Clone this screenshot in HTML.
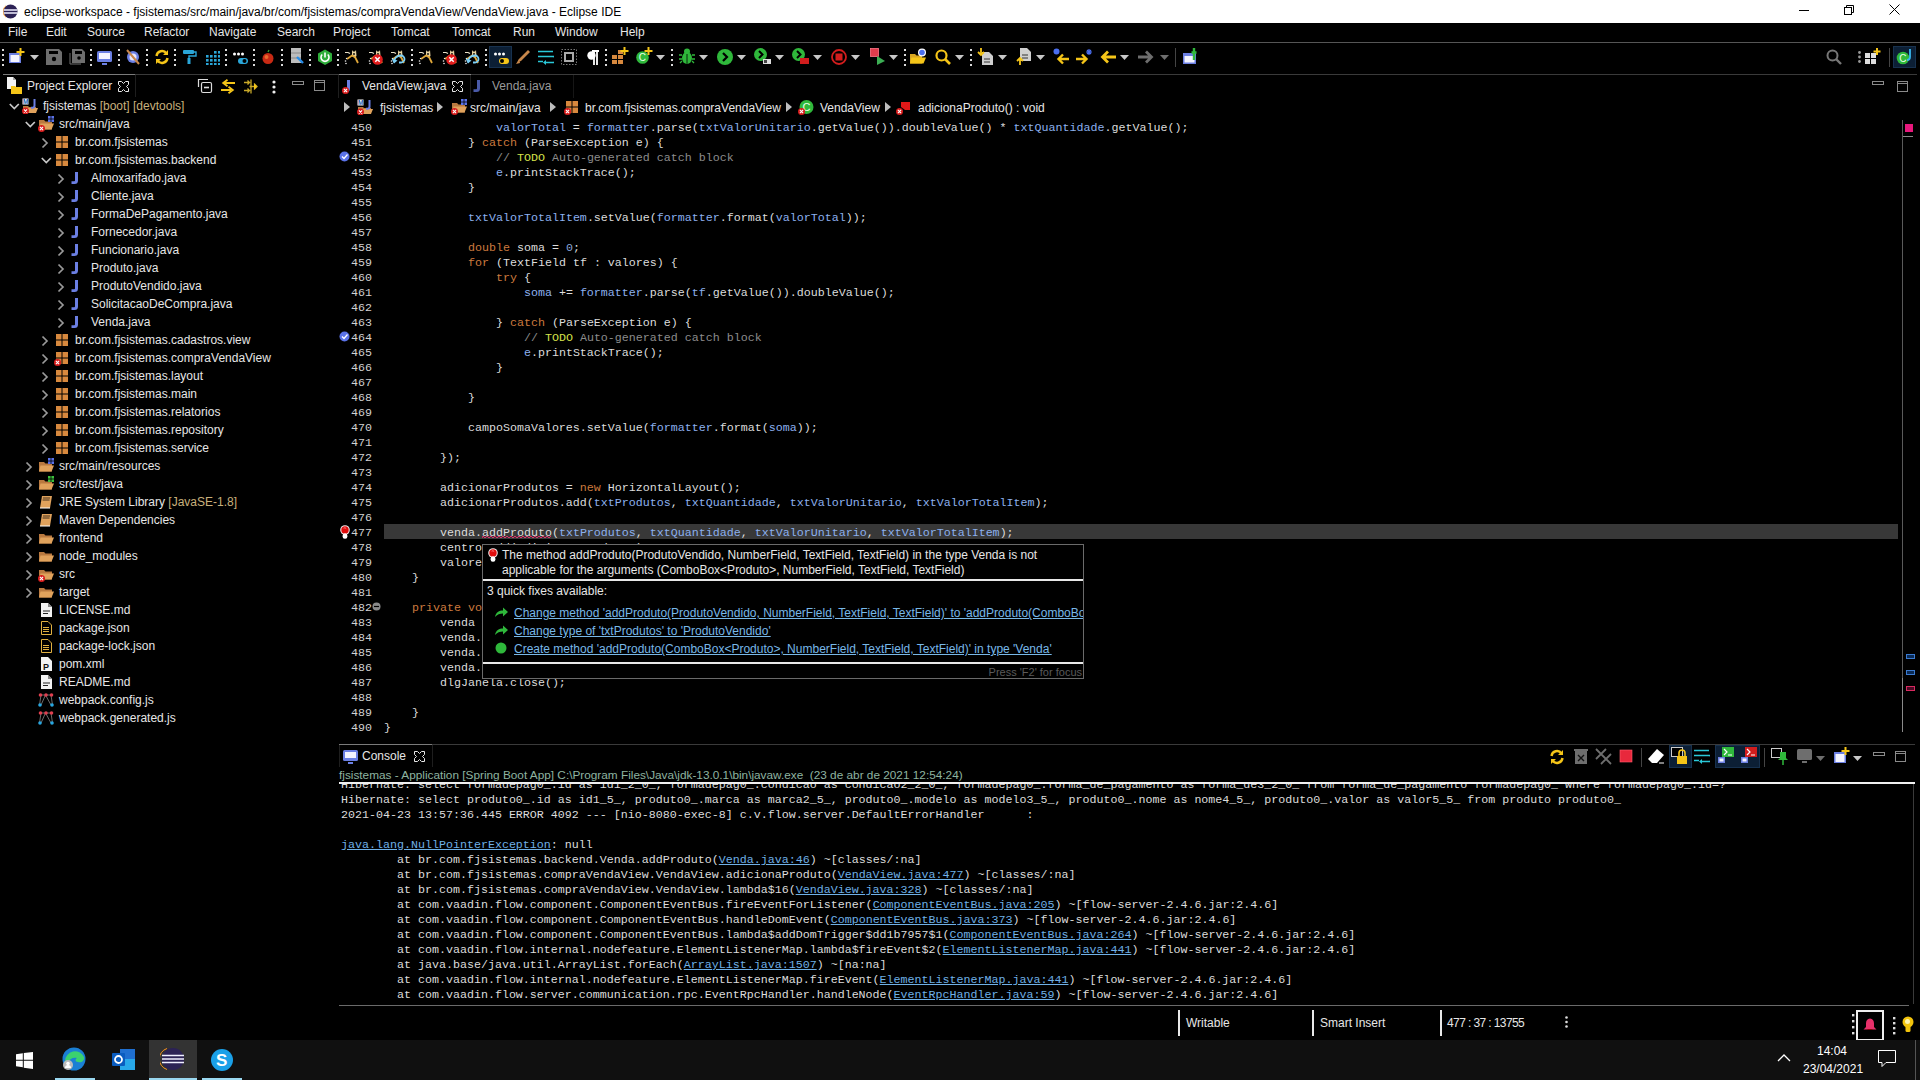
<!DOCTYPE html>
<html><head><meta charset="utf-8"><title>Eclipse IDE</title>
<style>
*{margin:0;padding:0;box-sizing:border-box}
html,body{width:1920px;height:1080px;overflow:hidden;background:#000}
body{position:relative;font-family:"Liberation Sans",sans-serif;font-size:12px;color:#dcdcdc}
.a{position:absolute}
.t{position:absolute;white-space:pre;line-height:15px}
.mono{font-family:"Liberation Mono",monospace;font-size:11.66px}
#title{left:0;top:0;width:1920px;height:23px;background:#fff;color:#000}
#menu{left:0;top:22px;width:1920px;height:20px;background:#000}
.hl{height:1px;background:#4a4a4a}
.vl{width:1px;background:#4a4a4a}
.code .ln{position:absolute;left:340px;width:32px;text-align:right;color:#d2d2d2}
.code .cl{position:absolute;left:384px;white-space:pre}
.k{color:#cc7a3e}.f{color:#8cb0ee}.c{color:#8c8c8c}.td{color:#d6e24a}.w{color:#e6e6e6}.n{color:#8aa6d8}
.tree .r{position:absolute;height:18px;line-height:18px;white-space:pre;color:#dcdcdc}
.dec{color:#c8b07c}
.lnk{color:#7cbde8;text-decoration:underline}
.con .cl{position:absolute;left:341px;white-space:pre;color:#dcdcdc}
.clk{color:#6fb0e6;text-decoration:underline}
</style></head><body>

<div class="a" id="title"></div>
<svg class="a" style="left:3px;top:4px" width="15" height="15" viewBox="0 0 15 15"><circle cx="7.5" cy="7.5" r="7" fill="#2c2255"/><path d="M0.8 6h13.4M0.8 9h13.4" stroke="#f0f0ff" stroke-width="1.3"/><path d="M3 1.8A7 7 0 0 0 3 13.2" stroke="#f7941e" stroke-width="0.8" fill="none"/></svg>
<div class="t" style="left:24px;top:5px;color:#000;font-size:12px">eclipse-workspace - fjsistemas/src/main/java/br/com/fjsistemas/compraVendaView/VendaView.java - Eclipse IDE</div>
<svg class="a" style="left:1799px;top:9px" width="10" height="3" viewBox="0 0 10 3"><path d="M0 1.5h10" stroke="#000" stroke-width="1"/></svg>
<svg class="a" style="left:1843px;top:4px" width="12" height="12" viewBox="0 0 12 12"><rect x="1.5" y="3.5" width="7" height="7" fill="none" stroke="#000"/><path d="M3.5 3.5V1.5h7v7h-2" fill="none" stroke="#000"/></svg>
<svg class="a" style="left:1889px;top:4px" width="11" height="11" viewBox="0 0 11 11"><path d="M0.5 0.5l10 10M10.5 0.5l-10 10" stroke="#000" stroke-width="1"/></svg>
<div class="a" style="left:0;top:23px;width:1920px;height:19px;background:#000"></div>
<div class="t" style="left:8px;top:25px;color:#e6e6e6;font-size:12px">File</div>
<div class="t" style="left:46px;top:25px;color:#e6e6e6;font-size:12px">Edit</div>
<div class="t" style="left:87px;top:25px;color:#e6e6e6;font-size:12px">Source</div>
<div class="t" style="left:144px;top:25px;color:#e6e6e6;font-size:12px">Refactor</div>
<div class="t" style="left:209px;top:25px;color:#e6e6e6;font-size:12px">Navigate</div>
<div class="t" style="left:277px;top:25px;color:#e6e6e6;font-size:12px">Search</div>
<div class="t" style="left:333px;top:25px;color:#e6e6e6;font-size:12px">Project</div>
<div class="t" style="left:391px;top:25px;color:#e6e6e6;font-size:12px">Tomcat</div>
<div class="t" style="left:452px;top:25px;color:#e6e6e6;font-size:12px">Tomcat</div>
<div class="t" style="left:513px;top:25px;color:#e6e6e6;font-size:12px">Run</div>
<div class="t" style="left:555px;top:25px;color:#e6e6e6;font-size:12px">Window</div>
<div class="t" style="left:620px;top:25px;color:#e6e6e6;font-size:12px">Help</div>
<div class="a" style="left:0;top:42px;width:1920px;height:1px;background:#555"></div>
<div class="a" style="left:2px;top:49px;width:2px;height:18px;background:repeating-linear-gradient(to bottom,#d8d8d8 0 2px,transparent 2px 5px)"></div>
<svg class="a" style="left:8px;top:48px" width="17" height="16" viewBox="0 0 17 16"><rect x="1" y="5" width="12" height="10" fill="#6b7fe3"/><rect x="2.5" y="7" width="9" height="7" fill="#f4f4ff"/><path d="M12.5 0v8M8.5 4h8" stroke="#f5c518" stroke-width="2"/></svg>
<svg class="a" style="left:30px;top:55px" width="9" height="5" viewBox="0 0 9 5"><path d="M0 0h9l-4.5 5z" fill="#c8c8c8"/></svg>
<svg class="a" style="left:46px;top:49px" width="16" height="16" viewBox="0 0 16 16"><path d="M0 0h13l3 3v13H0z" fill="#6e6e6e"/><rect x="3" y="2" width="9" height="3" fill="#000"/><circle cx="8" cy="10" r="2.2" fill="#000"/></svg>
<svg class="a" style="left:69px;top:49px" width="16" height="16" viewBox="0 0 16 16"><path d="M3 0h10l3 3v11H3z" fill="#6e6e6e"/><rect x="6" y="2" width="7" height="3" fill="#000"/><circle cx="10" cy="9" r="1.8" fill="#000"/><path d="M1 4v11h11" stroke="#6e6e6e" stroke-width="1" fill="none"/></svg>
<div class="a" style="left:90px;top:49px;width:2px;height:18px;background:repeating-linear-gradient(to bottom,#d8d8d8 0 2px,transparent 2px 5px)"></div>
<svg class="a" style="left:97px;top:51px" width="15" height="14" viewBox="0 0 15 14"><rect x="0" y="0" width="15" height="11" rx="1.5" fill="#6b7fe3"/><rect x="2" y="2" width="11" height="6" fill="#f4f4ff"/><path d="M5 13h5" stroke="#6b7fe3" stroke-width="2"/></svg>
<div class="a" style="left:118px;top:49px;width:2px;height:18px;background:repeating-linear-gradient(to bottom,#d8d8d8 0 2px,transparent 2px 5px)"></div>
<svg class="a" style="left:125px;top:49px" width="16" height="16" viewBox="0 0 16 16"><circle cx="8" cy="8" r="6" fill="#6b7fe3"/><circle cx="8" cy="8" r="3.5" fill="#e8e8ff"/><path d="M2 1l12 14" stroke="#c8874a" stroke-width="2"/></svg>
<div class="a" style="left:146px;top:49px;width:2px;height:18px;background:repeating-linear-gradient(to bottom,#d8d8d8 0 2px,transparent 2px 5px)"></div>
<svg class="a" style="left:154px;top:49px" width="16" height="16" viewBox="0 0 16 16"><path d="M2.5 7a5.5 5.5 0 0 1 10-2.5M13.5 9a5.5 5.5 0 0 1-10 2.5" stroke="#f5c518" stroke-width="2.4" fill="none"/><path d="M14 1v5h-5zM2 15v-5h5z" fill="#f5c518"/></svg>
<div class="a" style="left:174px;top:49px;width:2px;height:18px;background:repeating-linear-gradient(to bottom,#d8d8d8 0 2px,transparent 2px 5px)"></div>
<svg class="a" style="left:182px;top:49px" width="16" height="16" viewBox="0 0 16 16"><rect x="1" y="1" width="11" height="4" rx="1" fill="#2aa6d8"/><path d="M12 3h2v4H7v3" stroke="#2aa6d8" stroke-width="1.4" fill="none"/><rect x="5.5" y="9" width="3" height="6" fill="#2aa6d8"/></svg>
<svg class="a" style="left:204px;top:49px" width="16" height="16" viewBox="0 0 16 16"><rect x="10" y="2" width="2.6" height="2.6" fill="#2aa6d8"/><rect x="14" y="2" width="2.6" height="2.6" fill="#2aa6d8"/><rect x="2" y="6" width="2.6" height="2.6" fill="#2aa6d8"/><rect x="6" y="6" width="2.6" height="2.6" fill="#2aa6d8"/><rect x="10" y="6" width="2.6" height="2.6" fill="#2aa6d8"/><rect x="14" y="6" width="2.6" height="2.6" fill="#2aa6d8"/><rect x="2" y="10" width="2.6" height="2.6" fill="#2aa6d8"/><rect x="6" y="10" width="2.6" height="2.6" fill="#2aa6d8"/><rect x="10" y="10" width="2.6" height="2.6" fill="#2aa6d8"/><rect x="14" y="10" width="2.6" height="2.6" fill="#2aa6d8"/><rect x="2" y="14" width="2.6" height="2.6" fill="#2aa6d8"/><rect x="6" y="14" width="2.6" height="2.6" fill="#2aa6d8"/><rect x="10" y="14" width="2.6" height="2.6" fill="#2aa6d8"/><rect x="14" y="14" width="2.6" height="2.6" fill="#2aa6d8"/></svg>
<div class="a" style="left:225px;top:49px;width:2px;height:18px;background:repeating-linear-gradient(to bottom,#d8d8d8 0 2px,transparent 2px 5px)"></div>
<svg class="a" style="left:232px;top:49px" width="16" height="16" viewBox="0 0 16 16"><circle cx="2.5" cy="5" r="1.5" fill="#fff"/><circle cx="6.5" cy="5" r="1.5" fill="#fff"/><circle cx="10.5" cy="5" r="1.5" fill="#fff"/><rect x="6" y="9" width="10" height="6" rx="3" fill="#2aa6d8"/><circle cx="12.5" cy="12" r="2" fill="#000"/></svg>
<div class="a" style="left:253px;top:49px;width:2px;height:18px;background:repeating-linear-gradient(to bottom,#d8d8d8 0 2px,transparent 2px 5px)"></div>
<svg class="a" style="left:262px;top:49px" width="12" height="16" viewBox="0 0 12 16"><circle cx="6" cy="9.5" r="5.5" fill="#c82a14"/><circle cx="4.5" cy="8" r="2" fill="#e86a30"/><path d="M6 3l1-2" stroke="#3a3" stroke-width="1.2"/></svg>
<div class="a" style="left:281px;top:49px;width:2px;height:18px;background:repeating-linear-gradient(to bottom,#d8d8d8 0 2px,transparent 2px 5px)"></div>
<svg class="a" style="left:290px;top:48px" width="16" height="16" viewBox="0 0 16 16"><rect x="1" y="0" width="10" height="15" fill="#bdbdbd"/><path d="M1 5h10M1 10h10" stroke="#888"/><path d="M7 9l6 6" stroke="#2a8ee8" stroke-width="2.4"/></svg>
<div class="a" style="left:309px;top:49px;width:2px;height:18px;background:repeating-linear-gradient(to bottom,#d8d8d8 0 2px,transparent 2px 5px)"></div>
<svg class="a" style="left:317px;top:49px" width="16" height="16" viewBox="0 0 16 16"><path d="M8 0.5l7 4v7.5l-7 4-7-4V4.5z" fill="#2fae3b"/><path d="M5.2 5.5a4 4 0 1 0 5.6 0M8 3.5v5" stroke="#fff" stroke-width="1.6" fill="none"/></svg>
<div class="a" style="left:337px;top:49px;width:2px;height:18px;background:repeating-linear-gradient(to bottom,#d8d8d8 0 2px,transparent 2px 5px)"></div>
<svg class="a" style="left:344px;top:49px" width="16" height="16" viewBox="0 0 16 16"><path d="M1 3.5h3l2 1" stroke="#e8e0c8" stroke-width="1.2" fill="none"/><path d="M8 1l1 1.5h2l1-1.5 0.5 6-2 2-2.5-2z" fill="#e6d2a0"/><circle cx="10" cy="5" r="0.9" fill="#000"/><path d="M3 10l5-3.5 3 1.5 3 6" stroke="#e0a83a" stroke-width="1.8" fill="none"/><circle cx="1.5" cy="12" r="0.8" fill="#eee"/><circle cx="2" cy="14.5" r="0.8" fill="#eee"/><circle cx="2.5" cy="9.5" r="0.7" fill="#eee"/></svg>
<svg class="a" style="left:368px;top:49px" width="16" height="16" viewBox="0 0 16 16"><path d="M1 3.5h3l2 1" stroke="#e8e0c8" stroke-width="1.2" fill="none"/><path d="M8 1l1 1.5h2l1-1.5 0.5 6-2 2-2.5-2z" fill="#e6d2a0"/><circle cx="10" cy="5" r="0.9" fill="#000"/><path d="M3 10l5-3.5 3 1.5 3 6" stroke="#e0a83a" stroke-width="1.8" fill="none"/><circle cx="1.5" cy="12" r="0.8" fill="#eee"/><circle cx="2" cy="14.5" r="0.8" fill="#eee"/><circle cx="2.5" cy="9.5" r="0.7" fill="#eee"/><circle cx="9.5" cy="10.5" r="5.3" fill="#e21d1d"/><path d="M7.3 8.3l4.4 4.4M11.7 8.3l-4.4 4.4" stroke="#fff" stroke-width="1.5"/></svg>
<svg class="a" style="left:390px;top:49px" width="16" height="16" viewBox="0 0 16 16"><path d="M1 3.5h3l2 1" stroke="#e8e0c8" stroke-width="1.2" fill="none"/><path d="M8 1l1 1.5h2l1-1.5 0.5 6-2 2-2.5-2z" fill="#e6d2a0"/><circle cx="10" cy="5" r="0.9" fill="#000"/><path d="M3 10l5-3.5 3 1.5 3 6" stroke="#e0a83a" stroke-width="1.8" fill="none"/><circle cx="1.5" cy="12" r="0.8" fill="#eee"/><circle cx="2" cy="14.5" r="0.8" fill="#eee"/><circle cx="2.5" cy="9.5" r="0.7" fill="#eee"/><path d="M4 13.5C4 9 7 6.5 11 6.5a3.5 3.5 0 0 1 0 7H9" stroke="#7cd0f8" stroke-width="1.8" fill="none"/><path d="M1.5 9.5l2.5 5 3.5-3z" fill="#7cd0f8"/></svg>
<div class="a" style="left:411px;top:49px;width:2px;height:18px;background:repeating-linear-gradient(to bottom,#d8d8d8 0 2px,transparent 2px 5px)"></div>
<svg class="a" style="left:418px;top:49px" width="16" height="16" viewBox="0 0 16 16"><path d="M1 3.5h3l2 1" stroke="#e8e0c8" stroke-width="1.2" fill="none"/><path d="M8 1l1 1.5h2l1-1.5 0.5 6-2 2-2.5-2z" fill="#e6d2a0"/><circle cx="10" cy="5" r="0.9" fill="#000"/><path d="M3 10l5-3.5 3 1.5 3 6" stroke="#e0a83a" stroke-width="1.8" fill="none"/><circle cx="1.5" cy="12" r="0.8" fill="#eee"/><circle cx="2" cy="14.5" r="0.8" fill="#eee"/><circle cx="2.5" cy="9.5" r="0.7" fill="#eee"/></svg>
<svg class="a" style="left:442px;top:49px" width="16" height="16" viewBox="0 0 16 16"><path d="M1 3.5h3l2 1" stroke="#e8e0c8" stroke-width="1.2" fill="none"/><path d="M8 1l1 1.5h2l1-1.5 0.5 6-2 2-2.5-2z" fill="#e6d2a0"/><circle cx="10" cy="5" r="0.9" fill="#000"/><path d="M3 10l5-3.5 3 1.5 3 6" stroke="#e0a83a" stroke-width="1.8" fill="none"/><circle cx="1.5" cy="12" r="0.8" fill="#eee"/><circle cx="2" cy="14.5" r="0.8" fill="#eee"/><circle cx="2.5" cy="9.5" r="0.7" fill="#eee"/><circle cx="9.5" cy="10.5" r="5.3" fill="#e21d1d"/><path d="M7.3 8.3l4.4 4.4M11.7 8.3l-4.4 4.4" stroke="#fff" stroke-width="1.5"/></svg>
<svg class="a" style="left:464px;top:49px" width="16" height="16" viewBox="0 0 16 16"><path d="M1 3.5h3l2 1" stroke="#e8e0c8" stroke-width="1.2" fill="none"/><path d="M8 1l1 1.5h2l1-1.5 0.5 6-2 2-2.5-2z" fill="#e6d2a0"/><circle cx="10" cy="5" r="0.9" fill="#000"/><path d="M3 10l5-3.5 3 1.5 3 6" stroke="#e0a83a" stroke-width="1.8" fill="none"/><circle cx="1.5" cy="12" r="0.8" fill="#eee"/><circle cx="2" cy="14.5" r="0.8" fill="#eee"/><circle cx="2.5" cy="9.5" r="0.7" fill="#eee"/><path d="M4 13.5C4 9 7 6.5 11 6.5a3.5 3.5 0 0 1 0 7H9" stroke="#7cd0f8" stroke-width="1.8" fill="none"/><path d="M1.5 9.5l2.5 5 3.5-3z" fill="#7cd0f8"/></svg>
<div class="a" style="left:485px;top:49px;width:2px;height:18px;background:repeating-linear-gradient(to bottom,#d8d8d8 0 2px,transparent 2px 5px)"></div>
<div class="a" style="left:489px;top:46px;width:23px;height:22px;background:#0c1f35;border:1px solid #17314e"></div>
<svg class="a" style="left:493px;top:49px" width="16" height="16" viewBox="0 0 16 16"><circle cx="2.5" cy="5" r="1.5" fill="#fff"/><circle cx="6.5" cy="5" r="1.5" fill="#fff"/><circle cx="10.5" cy="5" r="1.5" fill="#fff"/><rect x="6" y="9" width="10" height="6" rx="3" fill="#f5c518"/><circle cx="9" cy="12" r="2" fill="#000"/></svg>
<svg class="a" style="left:515px;top:49px" width="16" height="16" viewBox="0 0 16 16"><path d="M13 1l2 2-9 9-3 1 1-3z" fill="#c8874a"/><path d="M4 10l-3 5 4-1" fill="#c8874a"/></svg>
<svg class="a" style="left:538px;top:50px" width="16" height="15" viewBox="0 0 16 15"><path d="M0 1.5h15M0 6.5h15a3 3 0 0 1 0 6H8M0 11.5h5" stroke="#2ac8d8" stroke-width="1.6" fill="none"/><path d="M8 10l-3 2.5 3 2.5z" fill="#2ac8d8"/></svg>
<svg class="a" style="left:561px;top:49px" width="16" height="16" viewBox="0 0 16 16"><rect x="0.5" y="0.5" width="15" height="15" fill="none" stroke="#777" stroke-dasharray="1.5 1.5"/><rect x="4" y="4" width="8" height="8" fill="none" stroke="#aaa" stroke-width="2"/></svg>
<svg class="a" style="left:586px;top:50px" width="14" height="15" viewBox="0 0 14 15"><path d="M6 1h7M8 1v14M11 1v14" stroke="#fff" stroke-width="1.8"/><circle cx="5.5" cy="5.5" r="4.2" fill="#fff"/></svg>
<div class="a" style="left:605px;top:49px;width:2px;height:18px;background:repeating-linear-gradient(to bottom,#d8d8d8 0 2px,transparent 2px 5px)"></div>
<svg class="a" style="left:612px;top:47px" width="17" height="17" viewBox="0 0 17 17"><rect x="0" y="8" width="5" height="4" fill="#d8893e"/><rect x="6" y="8" width="5" height="4" fill="#d8893e"/><rect x="0" y="13" width="5" height="4" fill="#d8893e"/><rect x="6" y="13" width="5" height="4" fill="#d8893e"/><rect x="6" y="3" width="5" height="4" fill="#d8893e"/><path d="M12.5 0v8M8.5 4h8" stroke="#f5c518" stroke-width="2"/></svg>
<svg class="a" style="left:636px;top:47px" width="17" height="17" viewBox="0 0 17 17"><circle cx="6.5" cy="10.5" r="6.3" fill="#2fb83b"/><text x="2.8" y="14.3" font-family="Liberation Sans" font-size="10" fill="#e8ffe8">C</text><path d="M12.5 0v8M8.5 4h8" stroke="#f5c518" stroke-width="2"/></svg>
<svg class="a" style="left:656px;top:55px" width="9" height="5" viewBox="0 0 9 5"><path d="M0 0h9l-4.5 5z" fill="#c8c8c8"/></svg>
<div class="a" style="left:671px;top:49px;width:2px;height:18px;background:repeating-linear-gradient(to bottom,#d8d8d8 0 2px,transparent 2px 5px)"></div>
<svg class="a" style="left:679px;top:48px" width="16" height="16" viewBox="0 0 16 16"><ellipse cx="8" cy="10" rx="5" ry="6" fill="#2fb83b"/><circle cx="8" cy="3.5" r="3" fill="#2fb83b"/><path d="M0 7h3M13 7h3M0 11h3M13 11h3M1 15l2-2M15 15l-2-2M8 5v11" stroke="#2fb83b" stroke-width="1.3"/><path d="M8 6v10" stroke="#000" stroke-width="0.8"/></svg>
<svg class="a" style="left:699px;top:55px" width="9" height="5" viewBox="0 0 9 5"><path d="M0 0h9l-4.5 5z" fill="#c8c8c8"/></svg>
<svg class="a" style="left:717px;top:49px" width="16" height="16" viewBox="0 0 16 16"><circle cx="8" cy="8" r="8" fill="#2fb83b"/><path d="M6 4l4 4-4 4" stroke="#000" stroke-width="2.2" fill="none"/></svg>
<svg class="a" style="left:737px;top:55px" width="9" height="5" viewBox="0 0 9 5"><path d="M0 0h9l-4.5 5z" fill="#c8c8c8"/></svg>
<svg class="a" style="left:754px;top:48px" width="17" height="17" viewBox="0 0 17 17"><circle cx="6.5" cy="6.5" r="6.5" fill="#2fb83b"/><path d="M5 3l3.5 3.5L5 10" stroke="#000" stroke-width="2" fill="none"/><rect x="9" y="11" width="8" height="5" fill="#ddd"/><rect x="10" y="12" width="3" height="3" fill="#444"/></svg>
<svg class="a" style="left:775px;top:55px" width="9" height="5" viewBox="0 0 9 5"><path d="M0 0h9l-4.5 5z" fill="#c8c8c8"/></svg>
<svg class="a" style="left:792px;top:48px" width="17" height="17" viewBox="0 0 17 17"><circle cx="6.5" cy="6.5" r="6.5" fill="#2fb83b"/><path d="M5 3l3.5 3.5L5 10" stroke="#000" stroke-width="2" fill="none"/><rect x="8" y="10" width="9" height="6" fill="#d21d1d"/></svg>
<svg class="a" style="left:813px;top:55px" width="9" height="5" viewBox="0 0 9 5"><path d="M0 0h9l-4.5 5z" fill="#c8c8c8"/></svg>
<svg class="a" style="left:831px;top:49px" width="16" height="16" viewBox="0 0 16 16"><circle cx="8" cy="8" r="7" fill="none" stroke="#d21d1d" stroke-width="1.8"/><rect x="4.5" y="4.5" width="7" height="7" fill="#d21d1d"/></svg>
<svg class="a" style="left:851px;top:55px" width="9" height="5" viewBox="0 0 9 5"><path d="M0 0h9l-4.5 5z" fill="#c8c8c8"/></svg>
<svg class="a" style="left:870px;top:48px" width="16" height="17" viewBox="0 0 16 17"><rect x="0.5" y="0.5" width="8" height="8" fill="#e03c4c" stroke="#ff7788" stroke-width="0.8"/><path d="M7 8l8 5-8 4z" fill="#3cae54"/></svg>
<svg class="a" style="left:889px;top:55px" width="9" height="5" viewBox="0 0 9 5"><path d="M0 0h9l-4.5 5z" fill="#c8c8c8"/></svg>
<div class="a" style="left:904px;top:49px;width:2px;height:18px;background:repeating-linear-gradient(to bottom,#d8d8d8 0 2px,transparent 2px 5px)"></div>
<svg class="a" style="left:910px;top:48px" width="17" height="17" viewBox="0 0 17 17"><path d="M0 6h5l1.5 1.5H12v8H0z" fill="#d8a520"/><path d="M1.5 9.5H16l-2.5 6H0z" fill="#f5c518"/><circle cx="12" cy="4.5" r="4" fill="#fff"/><circle cx="12" cy="4.5" r="2.8" fill="#4a6ef0"/></svg>
<svg class="a" style="left:935px;top:49px" width="16" height="16" viewBox="0 0 16 16"><circle cx="6.5" cy="6.5" r="5" fill="none" stroke="#f5c518" stroke-width="2.2"/><path d="M10 10l5 5" stroke="#f5c518" stroke-width="2.6"/></svg>
<svg class="a" style="left:955px;top:55px" width="9" height="5" viewBox="0 0 9 5"><path d="M0 0h9l-4.5 5z" fill="#c8c8c8"/></svg>
<div class="a" style="left:970px;top:49px;width:2px;height:18px;background:repeating-linear-gradient(to bottom,#d8d8d8 0 2px,transparent 2px 5px)"></div>
<svg class="a" style="left:977px;top:48px" width="17" height="17" viewBox="0 0 17 17"><path d="M5 4h7l4 4v9H5z" fill="#cfcfcf"/><path d="M7 11h6M7 14h6" stroke="#333"/><path d="M4 0v7M1 4l3 3 3-3" stroke="#f5c518" stroke-width="1.8" fill="none"/></svg>
<svg class="a" style="left:998px;top:55px" width="9" height="5" viewBox="0 0 9 5"><path d="M0 0h9l-4.5 5z" fill="#c8c8c8"/></svg>
<svg class="a" style="left:1016px;top:48px" width="17" height="17" viewBox="0 0 17 17"><path d="M4 0h7l4 4v9H4z" fill="#cfcfcf"/><path d="M6 7h6M6 10h6" stroke="#333"/><path d="M4 17v-7M1 13l3-3 3 3" stroke="#f5c518" stroke-width="1.8" fill="none"/></svg>
<svg class="a" style="left:1036px;top:55px" width="9" height="5" viewBox="0 0 9 5"><path d="M0 0h9l-4.5 5z" fill="#c8c8c8"/></svg>
<svg class="a" style="left:1053px;top:48px" width="17" height="17" viewBox="0 0 17 17"><circle cx="3.5" cy="3.5" r="3" fill="#4a6ef0"/><path d="M16 11H6M10 6.5l-4.5 4.5 4.5 4.5" stroke="#f5c518" stroke-width="2.4" fill="none"/></svg>
<svg class="a" style="left:1076px;top:48px" width="17" height="17" viewBox="0 0 17 17"><path d="M0 11h10M6 6.5l4.5 4.5L6 15.5" stroke="#f5c518" stroke-width="2.4" fill="none"/><path d="M13 1v6M10 4h6M11 2l4 4M15 2l-4 4" stroke="#4a6ef0" stroke-width="1.2"/></svg>
<svg class="a" style="left:1100px;top:49px" width="16" height="16" viewBox="0 0 16 16"><path d="M16 8H3M8 2.5L2.5 8 8 13.5" stroke="#f5c518" stroke-width="2.8" fill="none"/></svg>
<svg class="a" style="left:1120px;top:55px" width="9" height="5" viewBox="0 0 9 5"><path d="M0 0h9l-4.5 5z" fill="#c8c8c8"/></svg>
<svg class="a" style="left:1138px;top:49px" width="16" height="16" viewBox="0 0 16 16"><path d="M0 8h13M8 2.5L13.5 8 8 13.5" stroke="#6e6e6e" stroke-width="2.8" fill="none"/></svg>
<svg class="a" style="left:1160px;top:55px" width="9" height="5" viewBox="0 0 9 5"><path d="M0 0h9l-4.5 5z" fill="#6e6e6e"/></svg>
<div class="a" style="left:1175px;top:48px;width:1px;height:19px;background:#444"></div>
<svg class="a" style="left:1183px;top:48px" width="16" height="17" viewBox="0 0 16 17"><rect x="0" y="5" width="13" height="11" fill="#6b7fe3"/><rect x="1.5" y="8" width="10" height="6.5" fill="#f4f4ff"/><path d="M11 0v7M8.5 4.5h5M11 7v5" stroke="#2fb83b" stroke-width="2.4"/></svg>
<svg class="a" style="left:1826px;top:49px" width="16" height="16" viewBox="0 0 16 16"><circle cx="6.5" cy="6.5" r="5" fill="none" stroke="#777" stroke-width="2"/><path d="M10 10l5 5" stroke="#777" stroke-width="2.4"/></svg>
<svg class="a" style="left:1858px;top:50px" width="3" height="14" viewBox="0 0 3 14"><circle cx="1.5" cy="2.5" r="1.4" fill="#999"/><circle cx="1.5" cy="7" r="1.4" fill="#999"/><circle cx="1.5" cy="11.5" r="1.4" fill="#999"/></svg>
<svg class="a" style="left:1864px;top:48px" width="17" height="17" viewBox="0 0 17 17"><rect x="1" y="5" width="5" height="5" fill="#ddd"/><rect x="7" y="5" width="5" height="5" fill="#ddd"/><rect x="1" y="11" width="5" height="5" fill="#ddd"/><rect x="7" y="11" width="5" height="5" fill="#ddd"/><path d="M13 0v7M9.5 3.5h7" stroke="#f5c518" stroke-width="2"/></svg>
<div class="a" style="left:1889px;top:48px;width:1px;height:19px;background:#444"></div>
<div class="a" style="left:1893px;top:46px;width:23px;height:22px;background:#0c1f35;border:1px solid #17314e"></div>
<svg class="a" style="left:1896px;top:48px" width="17" height="17" viewBox="0 0 17 17"><circle cx="7" cy="10" r="6.3" fill="#2fb83b"/><text x="3.3" y="13.8" font-family="Liberation Sans" font-size="10" fill="#e8ffe8">C</text><path d="M14 1v8a3 3 0 0 1-3 3" stroke="#38b8f0" stroke-width="1.8" fill="none"/></svg>
<div class="a" style="left:3px;top:74px;width:1914px;height:1px;background:#3a3a3a"></div>
<div class="a" style="left:3px;top:74px;width:132px;height:1px;background:#7a7a7a"></div>
<div class="a" style="left:135px;top:75px;width:1px;height:22px;background:#1e1e1e"></div>
<svg class="a" style="left:6px;top:77px" width="17" height="17" viewBox="0 0 17 17"><path d="M1 0h6l3 3v9H1z" fill="#f2f2f2"/><path d="M7 0v3h3" fill="#aaa"/><path d="M5 9h4l1 1h6v7H5z" fill="#f5c518"/></svg>
<div class="t" style="left:27px;top:79px;color:#e6e6e6">Project Explorer</div>
<svg class="a" style="left:118px;top:81px" width="11" height="11" viewBox="0 0 11 11"><path d="M0.5 0.5h3l2 2 2-2h3v3l-2 2 2 2v3h-3l-2-2-2 2h-3v-3l2-2-2-2z" fill="none" stroke="#e8e8e8" stroke-width="1"/></svg>
<svg class="a" style="left:197px;top:78px" width="16" height="16" viewBox="0 0 16 16"><path d="M1.5 9V1.5H11" stroke="#ddd" stroke-width="1.2" fill="none"/><rect x="4.5" y="4.5" width="10" height="10" rx="1.5" fill="none" stroke="#ddd" stroke-width="1.2"/><path d="M7 9.5h5" stroke="#ddd" stroke-width="1.6"/></svg>
<svg class="a" style="left:221px;top:79px" width="16" height="15" viewBox="0 0 16 15"><path d="M14 4H4M6.5 0.8L2.2 4l4.3 3.2M0 11h10M7.5 7.8L11.8 11l-4.3 3.2" stroke="#f5c518" stroke-width="1.8" fill="none"/></svg>
<svg class="a" style="left:244px;top:79px" width="14" height="15" viewBox="0 0 14 15"><path d="M0 3.5h5M3.5 1.5l2 2-2 2M0 11.5h5M3.5 9.5l2 2-2 2M7 0.5v14M5.5 7.5h6M10 4.5l3 3-3 3" stroke="#c8a828" stroke-width="1.3" fill="none"/><path d="M10 4.5l3 3-3 3z" fill="#f5c518"/></svg>
<svg class="a" style="left:272px;top:80px" width="4" height="14" viewBox="0 0 4 14"><circle cx="2" cy="2" r="1.6" fill="#eee"/><circle cx="2" cy="7" r="1.6" fill="#eee"/><circle cx="2" cy="12" r="1.6" fill="#eee"/></svg>
<svg class="a" style="left:292px;top:81px" width="12" height="5" viewBox="0 0 12 5"><rect x="0.5" y="0.5" width="11" height="3" fill="none" stroke="#8a8a8a"/></svg>
<svg class="a" style="left:314px;top:80px" width="11" height="11" viewBox="0 0 11 11"><rect x="0.5" y="0.5" width="10" height="10" fill="none" stroke="#8a8a8a"/><path d="M0.5 2.5h10" stroke="#8a8a8a"/></svg>
<div class="a" style="left:339px;top:74px;width:132px;height:1px;background:#8a8a8a"></div>
<div class="a" style="left:338px;top:75px;width:1px;height:23px;background:#1e1e1e"></div>
<div class="a" style="left:470px;top:75px;width:1px;height:23px;background:#1e1e1e"></div>
<div class="a" style="left:573px;top:75px;width:1px;height:23px;background:#161616"></div>
<svg class="a" style="left:342px;top:78px" width="16" height="16" viewBox="0 0 16 16"><path d="M5 2h3v8.5a3.5 3.5 0 0 1-3.5 3.5H1.5v-2.8h2.7a0.8 0.8 0 0 0 0.8-0.8z" fill="#6b7fe3"/><circle cx="3.5" cy="12.5" r="3.5" fill="#d81b1b"/><path d="M1.9 10.9l3.2 3.2M5.1 10.9l-3.2 3.2" stroke="#fff" stroke-width="1.1"/></svg>
<div class="t" style="left:362px;top:79px;color:#e6e6e6">VendaView.java</div>
<svg class="a" style="left:452px;top:81px" width="11" height="11" viewBox="0 0 11 11"><path d="M0.5 0.5h3l2 2 2-2h3v3l-2 2 2 2v3h-3l-2-2-2 2h-3v-3l2-2-2-2z" fill="none" stroke="#e8e8e8" stroke-width="1"/></svg>
<svg class="a" style="left:472px;top:78px" width="16" height="16" viewBox="0 0 16 16"><path d="M5 2h3v8.5a3.5 3.5 0 0 1-3.5 3.5H1.5v-2.8h2.7a0.8 0.8 0 0 0 0.8-0.8z" fill="#4a5aa8"/></svg>
<div class="t" style="left:492px;top:79px;color:#9a9a9a">Venda.java</div>
<svg class="a" style="left:1872px;top:81px" width="12" height="5" viewBox="0 0 12 5"><rect x="0.5" y="0.5" width="11" height="3" fill="none" stroke="#8a8a8a"/></svg>
<svg class="a" style="left:1897px;top:81px" width="11" height="11" viewBox="0 0 11 11"><rect x="0.5" y="0.5" width="10" height="10" fill="none" stroke="#8a8a8a"/><path d="M0.5 2.5h10" stroke="#8a8a8a"/></svg>
<svg class="a" style="left:344px;top:102px" width="6" height="10" viewBox="0 0 6 10"><path d="M0 0l6 5-6 5z" fill="#bdbdbd"/></svg>
<svg class="a" style="left:357px;top:99px" width="16" height="16" viewBox="0 0 16 16"><path d="M1 8h5l1 1H14v6H1z" fill="#b9793f"/><path d="M2.5 10H16l-2 5H1z" fill="#e0a25c"/><rect x="0.5" y="0.5" width="6" height="6" fill="#fff"/><text x="1" y="6" font-family="Liberation Sans" font-weight="bold" font-size="6.5" fill="#2060b0">M</text><path d="M12.5 1v6.5a2.2 2.2 0 0 1-2.2 2.2H9" stroke="#6b7fe3" stroke-width="2" fill="none"/><circle cx="3.5" cy="13" r="3.5" fill="#d81b1b"/><path d="M1.9 11.4l3.2 3.2M5.1 11.4l-3.2 3.2" stroke="#fff" stroke-width="1.1"/></svg>
<div class="t" style="left:380px;top:101px;color:#e6e6e6">fjsistemas</div>
<svg class="a" style="left:437px;top:102px" width="6" height="10" viewBox="0 0 6 10"><path d="M0 0l6 5-6 5z" fill="#bdbdbd"/></svg>
<svg class="a" style="left:451px;top:99px" width="16" height="16" viewBox="0 0 16 16"><path d="M1 4h5l1.5 1.5H14v8H1z" fill="#b9793f"/><path d="M2.5 7.5H16l-2.5 6H1z" fill="#e0a25c"/><rect x="10" y="0" width="6" height="6" fill="#5a72e8"/><path d="M13 0v6M10 3h6" stroke="#000" stroke-width="0.8"/><circle cx="3.5" cy="12.5" r="3.5" fill="#d81b1b"/><path d="M1.9 10.9l3.2 3.2M5.1 10.9l-3.2 3.2" stroke="#fff" stroke-width="1.1"/></svg>
<div class="t" style="left:470px;top:101px;color:#e6e6e6">src/main/java</div>
<svg class="a" style="left:550px;top:102px" width="6" height="10" viewBox="0 0 6 10"><path d="M0 0l6 5-6 5z" fill="#bdbdbd"/></svg>
<svg class="a" style="left:564px;top:99px" width="16" height="16" viewBox="0 0 16 16"><rect x="2" y="2" width="5.5" height="5.5" fill="#d8893e"/><rect x="8.5" y="2" width="5.5" height="5.5" fill="#d8893e"/><rect x="2" y="8.5" width="5.5" height="5.5" fill="#d8893e"/><rect x="8.5" y="8.5" width="5.5" height="5.5" fill="#d8893e"/><circle cx="3.5" cy="12.5" r="3.5" fill="#d81b1b"/><path d="M1.9 10.9l3.2 3.2M5.1 10.9l-3.2 3.2" stroke="#fff" stroke-width="1.1"/></svg>
<div class="t" style="left:585px;top:101px;color:#e6e6e6">br.com.fjsistemas.compraVendaView</div>
<svg class="a" style="left:786px;top:102px" width="6" height="10" viewBox="0 0 6 10"><path d="M0 0l6 5-6 5z" fill="#bdbdbd"/></svg>
<svg class="a" style="left:798px;top:99px" width="16" height="16" viewBox="0 0 16 16"><circle cx="8.5" cy="8" r="7" fill="#2fb83b"/><text x="4.6" y="12.2" font-family="Liberation Sans" font-size="11" fill="#e8ffe8">C</text><circle cx="3.5" cy="12.5" r="3.5" fill="#d81b1b"/><path d="M1.9 10.9l3.2 3.2M5.1 10.9l-3.2 3.2" stroke="#fff" stroke-width="1.1"/></svg>
<div class="t" style="left:820px;top:101px;color:#e6e6e6">VendaView</div>
<svg class="a" style="left:885px;top:102px" width="6" height="10" viewBox="0 0 6 10"><path d="M0 0l6 5-6 5z" fill="#bdbdbd"/></svg>
<svg class="a" style="left:896px;top:99px" width="16" height="16" viewBox="0 0 16 16"><path d="M5 3h9v8H9l-4-3z" fill="#e01818"/><circle cx="3.5" cy="12.5" r="3.5" fill="#d81b1b"/><path d="M1.9 10.9l3.2 3.2M5.1 10.9l-3.2 3.2" stroke="#fff" stroke-width="1.1"/></svg>
<div class="t" style="left:918px;top:101px;color:#e6e6e6">adicionaProduto() : void</div>
<div class="code mono">
<div class="a" style="left:384px;top:524px;width:1514px;height:15px;background:#383838"></div>
<div class="t ln" style="top:121px">450</div>
<div class="t cl" style="top:121px">                <span class="f">valorTotal</span> = <span class="f">formatter</span>.parse(<span class="f">txtValorUnitario</span>.getValue()).doubleValue() * <span class="f">txtQuantidade</span>.getValue();</div>
<div class="t ln" style="top:136px">451</div>
<div class="t cl" style="top:136px">            } <span class="k">catch</span> (ParseException e) {</div>
<div class="t ln" style="top:151px">452</div>
<div class="t cl" style="top:151px">                <span class="c">// <span class="td">TODO</span> Auto-generated catch block</span></div>
<div class="t ln" style="top:166px">453</div>
<div class="t cl" style="top:166px">                <span class="f">e</span>.printStackTrace();</div>
<div class="t ln" style="top:181px">454</div>
<div class="t cl" style="top:181px">            }</div>
<div class="t ln" style="top:196px">455</div>
<div class="t ln" style="top:211px">456</div>
<div class="t cl" style="top:211px">            <span class="f">txtValorTotalItem</span>.setValue(<span class="f">formatter</span>.format(<span class="f">valorTotal</span>));</div>
<div class="t ln" style="top:226px">457</div>
<div class="t ln" style="top:241px">458</div>
<div class="t cl" style="top:241px">            <span class="k">double</span> soma = <span class="n">0</span>;</div>
<div class="t ln" style="top:256px">459</div>
<div class="t cl" style="top:256px">            <span class="k">for</span> (TextField tf : valores) {</div>
<div class="t ln" style="top:271px">460</div>
<div class="t cl" style="top:271px">                <span class="k">try</span> {</div>
<div class="t ln" style="top:286px">461</div>
<div class="t cl" style="top:286px">                    <span class="f">soma</span> += <span class="f">formatter</span>.parse(<span class="f">tf</span>.getValue()).doubleValue();</div>
<div class="t ln" style="top:301px">462</div>
<div class="t ln" style="top:316px">463</div>
<div class="t cl" style="top:316px">                } <span class="k">catch</span> (ParseException e) {</div>
<div class="t ln" style="top:331px">464</div>
<div class="t cl" style="top:331px">                    <span class="c">// <span class="td">TODO</span> Auto-generated catch block</span></div>
<div class="t ln" style="top:346px">465</div>
<div class="t cl" style="top:346px">                    <span class="f">e</span>.printStackTrace();</div>
<div class="t ln" style="top:361px">466</div>
<div class="t cl" style="top:361px">                }</div>
<div class="t ln" style="top:376px">467</div>
<div class="t ln" style="top:391px">468</div>
<div class="t cl" style="top:391px">            }</div>
<div class="t ln" style="top:406px">469</div>
<div class="t ln" style="top:421px">470</div>
<div class="t cl" style="top:421px">            campoSomaValores.setValue(<span class="f">formatter</span>.format(<span class="f">soma</span>));</div>
<div class="t ln" style="top:436px">471</div>
<div class="t ln" style="top:451px">472</div>
<div class="t cl" style="top:451px">        });</div>
<div class="t ln" style="top:466px">473</div>
<div class="t ln" style="top:481px">474</div>
<div class="t cl" style="top:481px">        adicionarProdutos = <span class="k">new</span> HorizontalLayout();</div>
<div class="t ln" style="top:496px">475</div>
<div class="t cl" style="top:496px">        adicionarProdutos.add(<span class="f">txtProdutos</span>, <span class="f">txtQuantidade</span>, <span class="f">txtValorUnitario</span>, <span class="f">txtValorTotalItem</span>);</div>
<div class="t ln" style="top:511px">476</div>
<div class="t ln" style="top:526px">477</div>
<div class="t cl" style="top:526px">        venda.<span class="sq">addProduto</span>(<span class="f">txtProdutos</span>, <span class="f">txtQuantidade</span>, <span class="f">txtValorUnitario</span>, <span class="f">txtValorTotalItem</span>);</div>
<div class="t ln" style="top:541px">478</div>
<div class="t cl" style="top:541px">        centro.add(adicionarProdutos);</div>
<div class="t ln" style="top:556px">479</div>
<div class="t cl" style="top:556px">        valores.add(txtValorTotalItem);</div>
<div class="t ln" style="top:571px">480</div>
<div class="t cl" style="top:571px">    }</div>
<div class="t ln" style="top:586px">481</div>
<div class="t ln" style="top:601px">482</div>
<div class="t cl" style="top:601px">    <span class="k">private</span> <span class="k">void</span> limparCampos() {</div>
<div class="t ln" style="top:616px">483</div>
<div class="t cl" style="top:616px">        venda = new Venda();</div>
<div class="t ln" style="top:631px">484</div>
<div class="t cl" style="top:631px">        venda.setQuantidade(0);</div>
<div class="t ln" style="top:646px">485</div>
<div class="t cl" style="top:646px">        venda.setValor(0);</div>
<div class="t ln" style="top:661px">486</div>
<div class="t cl" style="top:661px">        venda.setTotal(0);</div>
<div class="t ln" style="top:676px">487</div>
<div class="t cl" style="top:676px">        dlgJanela.close();</div>
<div class="t ln" style="top:691px">488</div>
<div class="t ln" style="top:706px">489</div>
<div class="t cl" style="top:706px">    }</div>
<div class="t ln" style="top:721px">490</div>
<div class="t cl" style="top:721px">}</div>
</div>
<div class="a con mono" style="left:0;top:0;width:1920px;height:1005px;clip-path:inset(783px 0 0 339px)">
<div class="t cl" style="top:778px">Hibernate: select formadepag0_.id as id1_2_0_, formadepag0_.condicao as condicao2_2_0_, formadepag0_.forma_de_pagamento as forma_de3_2_0_ from forma_de_pagamento formadepag0_ where formadepag0_.id=?</div>
<div class="t cl" style="top:793px">Hibernate: select produto0_.id as id1_5_, produto0_.marca as marca2_5_, produto0_.modelo as modelo3_5_, produto0_.nome as nome4_5_, produto0_.valor as valor5_5_ from produto produto0_</div>
<div class="t cl" style="top:808px">2021-04-23 13:57:36.445 ERROR 4092 --- [nio-8080-exec-8] c.v.flow.server.DefaultErrorHandler      : </div>
<div class="t cl" style="top:838px"><span class="clk">java.lang.NullPointerException</span>: null</div>
<div class="t cl" style="top:853px">        at br.com.fjsistemas.backend.Venda.addProduto(<span class="clk">Venda.java:46</span>) ~[classes/:na]</div>
<div class="t cl" style="top:868px">        at br.com.fjsistemas.compraVendaView.VendaView.adicionaProduto(<span class="clk">VendaView.java:477</span>) ~[classes/:na]</div>
<div class="t cl" style="top:883px">        at br.com.fjsistemas.compraVendaView.VendaView.lambda$16(<span class="clk">VendaView.java:328</span>) ~[classes/:na]</div>
<div class="t cl" style="top:898px">        at com.vaadin.flow.component.ComponentEventBus.fireEventForListener(<span class="clk">ComponentEventBus.java:205</span>) ~[flow-server-2.4.6.jar:2.4.6]</div>
<div class="t cl" style="top:913px">        at com.vaadin.flow.component.ComponentEventBus.handleDomEvent(<span class="clk">ComponentEventBus.java:373</span>) ~[flow-server-2.4.6.jar:2.4.6]</div>
<div class="t cl" style="top:928px">        at com.vaadin.flow.component.ComponentEventBus.lambda$addDomTrigger$dd1b7957$1(<span class="clk">ComponentEventBus.java:264</span>) ~[flow-server-2.4.6.jar:2.4.6]</div>
<div class="t cl" style="top:943px">        at com.vaadin.flow.internal.nodefeature.ElementListenerMap.lambda$fireEvent$2(<span class="clk">ElementListenerMap.java:441</span>) ~[flow-server-2.4.6.jar:2.4.6]</div>
<div class="t cl" style="top:958px">        at java.base/java.util.ArrayList.forEach(<span class="clk">ArrayList.java:1507</span>) ~[na:na]</div>
<div class="t cl" style="top:973px">        at com.vaadin.flow.internal.nodefeature.ElementListenerMap.fireEvent(<span class="clk">ElementListenerMap.java:441</span>) ~[flow-server-2.4.6.jar:2.4.6]</div>
<div class="t cl" style="top:988px">        at com.vaadin.flow.server.communication.rpc.EventRpcHandler.handleNode(<span class="clk">EventRpcHandler.java:59</span>) ~[flow-server-2.4.6.jar:2.4.6]</div>
</div>
<svg class="a" style="left:9px;top:102px" width="11" height="9" viewBox="0 0 11 9"><path d="M0.8 2l4.5 4.5 4.5-4.5" stroke="#c8c8c8" stroke-width="1.7" fill="none"/></svg>
<svg class="a" style="left:22px;top:98px" width="16" height="16" viewBox="0 0 16 16"><path d="M1 8h5l1 1H14v6H1z" fill="#b9793f"/><path d="M2.5 10H16l-2 5H1z" fill="#e0a25c"/><rect x="0.5" y="0.5" width="6" height="6" fill="#fff"/><text x="1" y="6" font-family="Liberation Sans" font-weight="bold" font-size="6.5" fill="#2060b0">M</text><path d="M12.5 1v6.5a2.2 2.2 0 0 1-2.2 2.2H9" stroke="#6b7fe3" stroke-width="2" fill="none"/><circle cx="3.5" cy="13" r="3.5" fill="#d81b1b"/><path d="M1.9 11.4l3.2 3.2M5.1 11.4l-3.2 3.2" stroke="#fff" stroke-width="1.1"/></svg>
<div class="t" style="left:43px;top:99px;color:#e6e6e6">fjsistemas<span class="dec"> [boot] [devtools]</span></div>
<svg class="a" style="left:25px;top:120px" width="11" height="9" viewBox="0 0 11 9"><path d="M0.8 2l4.5 4.5 4.5-4.5" stroke="#c8c8c8" stroke-width="1.7" fill="none"/></svg>
<svg class="a" style="left:38px;top:116px" width="16" height="16" viewBox="0 0 16 16"><path d="M1 4h5l1.5 1.5H14v8H1z" fill="#b9793f"/><path d="M2.5 7.5H16l-2.5 6H1z" fill="#e0a25c"/><rect x="10" y="0" width="6" height="6" fill="#5a72e8"/><path d="M13 0v6M10 3h6" stroke="#000" stroke-width="0.8"/><circle cx="3.5" cy="12.5" r="3.5" fill="#d81b1b"/><path d="M1.9 10.9l3.2 3.2M5.1 10.9l-3.2 3.2" stroke="#fff" stroke-width="1.1"/></svg>
<div class="t" style="left:59px;top:117px;color:#e6e6e6">src/main/java</div>
<svg class="a" style="left:41px;top:137px" width="8" height="12" viewBox="0 0 8 12"><path d="M1.5 1.5l4.5 4.5-4.5 4.5" stroke="#9a9a9a" stroke-width="1.7" fill="none"/></svg>
<svg class="a" style="left:54px;top:134px" width="16" height="16" viewBox="0 0 16 16"><rect x="2" y="2" width="5.5" height="5.5" fill="#d8893e"/><rect x="8.5" y="2" width="5.5" height="5.5" fill="#d8893e"/><rect x="2" y="8.5" width="5.5" height="5.5" fill="#d8893e"/><rect x="8.5" y="8.5" width="5.5" height="5.5" fill="#d8893e"/></svg>
<div class="t" style="left:75px;top:135px;color:#e6e6e6">br.com.fjsistemas</div>
<svg class="a" style="left:41px;top:156px" width="11" height="9" viewBox="0 0 11 9"><path d="M0.8 2l4.5 4.5 4.5-4.5" stroke="#c8c8c8" stroke-width="1.7" fill="none"/></svg>
<svg class="a" style="left:54px;top:152px" width="16" height="16" viewBox="0 0 16 16"><rect x="2" y="2" width="5.5" height="5.5" fill="#d8893e"/><rect x="8.5" y="2" width="5.5" height="5.5" fill="#d8893e"/><rect x="2" y="8.5" width="5.5" height="5.5" fill="#d8893e"/><rect x="8.5" y="8.5" width="5.5" height="5.5" fill="#d8893e"/></svg>
<div class="t" style="left:75px;top:153px;color:#e6e6e6">br.com.fjsistemas.backend</div>
<svg class="a" style="left:57px;top:173px" width="8" height="12" viewBox="0 0 8 12"><path d="M1.5 1.5l4.5 4.5-4.5 4.5" stroke="#9a9a9a" stroke-width="1.7" fill="none"/></svg>
<svg class="a" style="left:70px;top:170px" width="16" height="16" viewBox="0 0 16 16"><path d="M5 2h3v8.5a3.5 3.5 0 0 1-3.5 3.5H1.5v-2.8h2.7a0.8 0.8 0 0 0 0.8-0.8z" fill="#6b7fe3"/></svg>
<div class="t" style="left:91px;top:171px;color:#e6e6e6">Almoxarifado.java</div>
<svg class="a" style="left:57px;top:191px" width="8" height="12" viewBox="0 0 8 12"><path d="M1.5 1.5l4.5 4.5-4.5 4.5" stroke="#9a9a9a" stroke-width="1.7" fill="none"/></svg>
<svg class="a" style="left:70px;top:188px" width="16" height="16" viewBox="0 0 16 16"><path d="M5 2h3v8.5a3.5 3.5 0 0 1-3.5 3.5H1.5v-2.8h2.7a0.8 0.8 0 0 0 0.8-0.8z" fill="#6b7fe3"/></svg>
<div class="t" style="left:91px;top:189px;color:#e6e6e6">Cliente.java</div>
<svg class="a" style="left:57px;top:209px" width="8" height="12" viewBox="0 0 8 12"><path d="M1.5 1.5l4.5 4.5-4.5 4.5" stroke="#9a9a9a" stroke-width="1.7" fill="none"/></svg>
<svg class="a" style="left:70px;top:206px" width="16" height="16" viewBox="0 0 16 16"><path d="M5 2h3v8.5a3.5 3.5 0 0 1-3.5 3.5H1.5v-2.8h2.7a0.8 0.8 0 0 0 0.8-0.8z" fill="#6b7fe3"/></svg>
<div class="t" style="left:91px;top:207px;color:#e6e6e6">FormaDePagamento.java</div>
<svg class="a" style="left:57px;top:227px" width="8" height="12" viewBox="0 0 8 12"><path d="M1.5 1.5l4.5 4.5-4.5 4.5" stroke="#9a9a9a" stroke-width="1.7" fill="none"/></svg>
<svg class="a" style="left:70px;top:224px" width="16" height="16" viewBox="0 0 16 16"><path d="M5 2h3v8.5a3.5 3.5 0 0 1-3.5 3.5H1.5v-2.8h2.7a0.8 0.8 0 0 0 0.8-0.8z" fill="#6b7fe3"/></svg>
<div class="t" style="left:91px;top:225px;color:#e6e6e6">Fornecedor.java</div>
<svg class="a" style="left:57px;top:245px" width="8" height="12" viewBox="0 0 8 12"><path d="M1.5 1.5l4.5 4.5-4.5 4.5" stroke="#9a9a9a" stroke-width="1.7" fill="none"/></svg>
<svg class="a" style="left:70px;top:242px" width="16" height="16" viewBox="0 0 16 16"><path d="M5 2h3v8.5a3.5 3.5 0 0 1-3.5 3.5H1.5v-2.8h2.7a0.8 0.8 0 0 0 0.8-0.8z" fill="#6b7fe3"/></svg>
<div class="t" style="left:91px;top:243px;color:#e6e6e6">Funcionario.java</div>
<svg class="a" style="left:57px;top:263px" width="8" height="12" viewBox="0 0 8 12"><path d="M1.5 1.5l4.5 4.5-4.5 4.5" stroke="#9a9a9a" stroke-width="1.7" fill="none"/></svg>
<svg class="a" style="left:70px;top:260px" width="16" height="16" viewBox="0 0 16 16"><path d="M5 2h3v8.5a3.5 3.5 0 0 1-3.5 3.5H1.5v-2.8h2.7a0.8 0.8 0 0 0 0.8-0.8z" fill="#6b7fe3"/></svg>
<div class="t" style="left:91px;top:261px;color:#e6e6e6">Produto.java</div>
<svg class="a" style="left:57px;top:281px" width="8" height="12" viewBox="0 0 8 12"><path d="M1.5 1.5l4.5 4.5-4.5 4.5" stroke="#9a9a9a" stroke-width="1.7" fill="none"/></svg>
<svg class="a" style="left:70px;top:278px" width="16" height="16" viewBox="0 0 16 16"><path d="M5 2h3v8.5a3.5 3.5 0 0 1-3.5 3.5H1.5v-2.8h2.7a0.8 0.8 0 0 0 0.8-0.8z" fill="#6b7fe3"/></svg>
<div class="t" style="left:91px;top:279px;color:#e6e6e6">ProdutoVendido.java</div>
<svg class="a" style="left:57px;top:299px" width="8" height="12" viewBox="0 0 8 12"><path d="M1.5 1.5l4.5 4.5-4.5 4.5" stroke="#9a9a9a" stroke-width="1.7" fill="none"/></svg>
<svg class="a" style="left:70px;top:296px" width="16" height="16" viewBox="0 0 16 16"><path d="M5 2h3v8.5a3.5 3.5 0 0 1-3.5 3.5H1.5v-2.8h2.7a0.8 0.8 0 0 0 0.8-0.8z" fill="#6b7fe3"/></svg>
<div class="t" style="left:91px;top:297px;color:#e6e6e6">SolicitacaoDeCompra.java</div>
<svg class="a" style="left:57px;top:317px" width="8" height="12" viewBox="0 0 8 12"><path d="M1.5 1.5l4.5 4.5-4.5 4.5" stroke="#9a9a9a" stroke-width="1.7" fill="none"/></svg>
<svg class="a" style="left:70px;top:314px" width="16" height="16" viewBox="0 0 16 16"><path d="M5 2h3v8.5a3.5 3.5 0 0 1-3.5 3.5H1.5v-2.8h2.7a0.8 0.8 0 0 0 0.8-0.8z" fill="#6b7fe3"/></svg>
<div class="t" style="left:91px;top:315px;color:#e6e6e6">Venda.java</div>
<svg class="a" style="left:41px;top:335px" width="8" height="12" viewBox="0 0 8 12"><path d="M1.5 1.5l4.5 4.5-4.5 4.5" stroke="#9a9a9a" stroke-width="1.7" fill="none"/></svg>
<svg class="a" style="left:54px;top:332px" width="16" height="16" viewBox="0 0 16 16"><rect x="2" y="2" width="5.5" height="5.5" fill="#d8893e"/><rect x="8.5" y="2" width="5.5" height="5.5" fill="#d8893e"/><rect x="2" y="8.5" width="5.5" height="5.5" fill="#d8893e"/><rect x="8.5" y="8.5" width="5.5" height="5.5" fill="#d8893e"/></svg>
<div class="t" style="left:75px;top:333px;color:#e6e6e6">br.com.fjsistemas.cadastros.view</div>
<svg class="a" style="left:41px;top:353px" width="8" height="12" viewBox="0 0 8 12"><path d="M1.5 1.5l4.5 4.5-4.5 4.5" stroke="#9a9a9a" stroke-width="1.7" fill="none"/></svg>
<svg class="a" style="left:54px;top:350px" width="16" height="16" viewBox="0 0 16 16"><rect x="2" y="2" width="5.5" height="5.5" fill="#d8893e"/><rect x="8.5" y="2" width="5.5" height="5.5" fill="#d8893e"/><rect x="2" y="8.5" width="5.5" height="5.5" fill="#d8893e"/><rect x="8.5" y="8.5" width="5.5" height="5.5" fill="#d8893e"/><circle cx="3.5" cy="12.5" r="3.5" fill="#d81b1b"/><path d="M1.9 10.9l3.2 3.2M5.1 10.9l-3.2 3.2" stroke="#fff" stroke-width="1.1"/></svg>
<div class="t" style="left:75px;top:351px;color:#e6e6e6">br.com.fjsistemas.compraVendaView</div>
<svg class="a" style="left:41px;top:371px" width="8" height="12" viewBox="0 0 8 12"><path d="M1.5 1.5l4.5 4.5-4.5 4.5" stroke="#9a9a9a" stroke-width="1.7" fill="none"/></svg>
<svg class="a" style="left:54px;top:368px" width="16" height="16" viewBox="0 0 16 16"><rect x="2" y="2" width="5.5" height="5.5" fill="#d8893e"/><rect x="8.5" y="2" width="5.5" height="5.5" fill="#d8893e"/><rect x="2" y="8.5" width="5.5" height="5.5" fill="#d8893e"/><rect x="8.5" y="8.5" width="5.5" height="5.5" fill="#d8893e"/></svg>
<div class="t" style="left:75px;top:369px;color:#e6e6e6">br.com.fjsistemas.layout</div>
<svg class="a" style="left:41px;top:389px" width="8" height="12" viewBox="0 0 8 12"><path d="M1.5 1.5l4.5 4.5-4.5 4.5" stroke="#9a9a9a" stroke-width="1.7" fill="none"/></svg>
<svg class="a" style="left:54px;top:386px" width="16" height="16" viewBox="0 0 16 16"><rect x="2" y="2" width="5.5" height="5.5" fill="#d8893e"/><rect x="8.5" y="2" width="5.5" height="5.5" fill="#d8893e"/><rect x="2" y="8.5" width="5.5" height="5.5" fill="#d8893e"/><rect x="8.5" y="8.5" width="5.5" height="5.5" fill="#d8893e"/></svg>
<div class="t" style="left:75px;top:387px;color:#e6e6e6">br.com.fjsistemas.main</div>
<svg class="a" style="left:41px;top:407px" width="8" height="12" viewBox="0 0 8 12"><path d="M1.5 1.5l4.5 4.5-4.5 4.5" stroke="#9a9a9a" stroke-width="1.7" fill="none"/></svg>
<svg class="a" style="left:54px;top:404px" width="16" height="16" viewBox="0 0 16 16"><rect x="2" y="2" width="5.5" height="5.5" fill="#d8893e"/><rect x="8.5" y="2" width="5.5" height="5.5" fill="#d8893e"/><rect x="2" y="8.5" width="5.5" height="5.5" fill="#d8893e"/><rect x="8.5" y="8.5" width="5.5" height="5.5" fill="#d8893e"/></svg>
<div class="t" style="left:75px;top:405px;color:#e6e6e6">br.com.fjsistemas.relatorios</div>
<svg class="a" style="left:41px;top:425px" width="8" height="12" viewBox="0 0 8 12"><path d="M1.5 1.5l4.5 4.5-4.5 4.5" stroke="#9a9a9a" stroke-width="1.7" fill="none"/></svg>
<svg class="a" style="left:54px;top:422px" width="16" height="16" viewBox="0 0 16 16"><rect x="2" y="2" width="5.5" height="5.5" fill="#d8893e"/><rect x="8.5" y="2" width="5.5" height="5.5" fill="#d8893e"/><rect x="2" y="8.5" width="5.5" height="5.5" fill="#d8893e"/><rect x="8.5" y="8.5" width="5.5" height="5.5" fill="#d8893e"/></svg>
<div class="t" style="left:75px;top:423px;color:#e6e6e6">br.com.fjsistemas.repository</div>
<svg class="a" style="left:41px;top:443px" width="8" height="12" viewBox="0 0 8 12"><path d="M1.5 1.5l4.5 4.5-4.5 4.5" stroke="#9a9a9a" stroke-width="1.7" fill="none"/></svg>
<svg class="a" style="left:54px;top:440px" width="16" height="16" viewBox="0 0 16 16"><rect x="2" y="2" width="5.5" height="5.5" fill="#d8893e"/><rect x="8.5" y="2" width="5.5" height="5.5" fill="#d8893e"/><rect x="2" y="8.5" width="5.5" height="5.5" fill="#d8893e"/><rect x="8.5" y="8.5" width="5.5" height="5.5" fill="#d8893e"/></svg>
<div class="t" style="left:75px;top:441px;color:#e6e6e6">br.com.fjsistemas.service</div>
<svg class="a" style="left:25px;top:461px" width="8" height="12" viewBox="0 0 8 12"><path d="M1.5 1.5l4.5 4.5-4.5 4.5" stroke="#9a9a9a" stroke-width="1.7" fill="none"/></svg>
<svg class="a" style="left:38px;top:458px" width="16" height="16" viewBox="0 0 16 16"><path d="M1 4h5l1.5 1.5H14v8H1z" fill="#b9793f"/><path d="M2.5 7.5H16l-2.5 6H1z" fill="#e0a25c"/><rect x="10" y="0" width="6" height="6" fill="#5a72e8"/><path d="M13 0v6M10 3h6" stroke="#000" stroke-width="0.8"/></svg>
<div class="t" style="left:59px;top:459px;color:#e6e6e6">src/main/resources</div>
<svg class="a" style="left:25px;top:479px" width="8" height="12" viewBox="0 0 8 12"><path d="M1.5 1.5l4.5 4.5-4.5 4.5" stroke="#9a9a9a" stroke-width="1.7" fill="none"/></svg>
<svg class="a" style="left:38px;top:476px" width="16" height="16" viewBox="0 0 16 16"><path d="M1 4h5l1.5 1.5H14v8H1z" fill="#b9793f"/><path d="M2.5 7.5H16l-2.5 6H1z" fill="#e0a25c"/><rect x="10" y="0" width="6" height="6" fill="#3cbf3c"/><path d="M13 0v6M10 3h6" stroke="#000" stroke-width="0.8"/></svg>
<div class="t" style="left:59px;top:477px;color:#e6e6e6">src/test/java</div>
<svg class="a" style="left:25px;top:497px" width="8" height="12" viewBox="0 0 8 12"><path d="M1.5 1.5l4.5 4.5-4.5 4.5" stroke="#9a9a9a" stroke-width="1.7" fill="none"/></svg>
<svg class="a" style="left:38px;top:494px" width="16" height="16" viewBox="0 0 16 16"><path d="M4 2h10l-2 12H2z" fill="#e0a25c"/><path d="M5 4h7M4.6 6h7" stroke="#000" stroke-width="0.7"/><path d="M2 14h10" stroke="#fff" stroke-width="1"/></svg>
<div class="t" style="left:59px;top:495px;color:#e6e6e6">JRE System Library<span class="dec"> [JavaSE-1.8]</span></div>
<svg class="a" style="left:25px;top:515px" width="8" height="12" viewBox="0 0 8 12"><path d="M1.5 1.5l4.5 4.5-4.5 4.5" stroke="#9a9a9a" stroke-width="1.7" fill="none"/></svg>
<svg class="a" style="left:38px;top:512px" width="16" height="16" viewBox="0 0 16 16"><path d="M4 2h10l-2 12H2z" fill="#e0a25c"/><path d="M5 4h7M4.6 6h7" stroke="#000" stroke-width="0.7"/><path d="M2 14h10" stroke="#fff" stroke-width="1"/></svg>
<div class="t" style="left:59px;top:513px;color:#e6e6e6">Maven Dependencies</div>
<svg class="a" style="left:25px;top:533px" width="8" height="12" viewBox="0 0 8 12"><path d="M1.5 1.5l4.5 4.5-4.5 4.5" stroke="#9a9a9a" stroke-width="1.7" fill="none"/></svg>
<svg class="a" style="left:38px;top:530px" width="16" height="16" viewBox="0 0 16 16"><path d="M1 4h5l1.5 1.5H14v8H1z" fill="#b9793f"/><path d="M2.5 7.5H16l-2.5 6H1z" fill="#e0a25c"/></svg>
<div class="t" style="left:59px;top:531px;color:#e6e6e6">frontend</div>
<svg class="a" style="left:25px;top:551px" width="8" height="12" viewBox="0 0 8 12"><path d="M1.5 1.5l4.5 4.5-4.5 4.5" stroke="#9a9a9a" stroke-width="1.7" fill="none"/></svg>
<svg class="a" style="left:38px;top:548px" width="16" height="16" viewBox="0 0 16 16"><path d="M1 4h5l1.5 1.5H14v8H1z" fill="#b9793f"/><path d="M2.5 7.5H16l-2.5 6H1z" fill="#e0a25c"/></svg>
<div class="t" style="left:59px;top:549px;color:#e6e6e6">node_modules</div>
<svg class="a" style="left:25px;top:569px" width="8" height="12" viewBox="0 0 8 12"><path d="M1.5 1.5l4.5 4.5-4.5 4.5" stroke="#9a9a9a" stroke-width="1.7" fill="none"/></svg>
<svg class="a" style="left:38px;top:566px" width="16" height="16" viewBox="0 0 16 16"><path d="M1 4h5l1.5 1.5H14v8H1z" fill="#b9793f"/><path d="M2.5 7.5H16l-2.5 6H1z" fill="#e0a25c"/><circle cx="3.5" cy="12.5" r="3.5" fill="#d81b1b"/><path d="M1.9 10.9l3.2 3.2M5.1 10.9l-3.2 3.2" stroke="#fff" stroke-width="1.1"/></svg>
<div class="t" style="left:59px;top:567px;color:#e6e6e6">src</div>
<svg class="a" style="left:25px;top:587px" width="8" height="12" viewBox="0 0 8 12"><path d="M1.5 1.5l4.5 4.5-4.5 4.5" stroke="#9a9a9a" stroke-width="1.7" fill="none"/></svg>
<svg class="a" style="left:38px;top:584px" width="16" height="16" viewBox="0 0 16 16"><path d="M1 4h5l1.5 1.5H14v8H1z" fill="#b9793f"/><path d="M2.5 7.5H16l-2.5 6H1z" fill="#e0a25c"/></svg>
<div class="t" style="left:59px;top:585px;color:#e6e6e6">target</div>
<svg class="a" style="left:38px;top:602px" width="16" height="16" viewBox="0 0 16 16"><path d="M3 1h7l4 4v10H3z" fill="#f2f2f2"/><path d="M10 1v4h4" fill="#888"/><path d="M5 9h7M5 11.5h5" stroke="#222" stroke-width="1.2"/></svg>
<div class="t" style="left:59px;top:603px;color:#e6e6e6">LICENSE.md</div>
<svg class="a" style="left:38px;top:620px" width="16" height="16" viewBox="0 0 16 16"><path d="M3.5 1.5h6.5l3.5 3.5v9.5h-10z" fill="none" stroke="#e0b040" stroke-width="1"/><path d="M5 7.5h6M5 9.5h6M5 11.5h6" stroke="#e0b040" stroke-width="1"/></svg>
<div class="t" style="left:59px;top:621px;color:#e6e6e6">package.json</div>
<svg class="a" style="left:38px;top:638px" width="16" height="16" viewBox="0 0 16 16"><path d="M3.5 1.5h6.5l3.5 3.5v9.5h-10z" fill="none" stroke="#e0b040" stroke-width="1"/><path d="M5 7.5h6M5 9.5h6M5 11.5h6" stroke="#e0b040" stroke-width="1"/></svg>
<div class="t" style="left:59px;top:639px;color:#e6e6e6">package-lock.json</div>
<svg class="a" style="left:38px;top:656px" width="16" height="16" viewBox="0 0 16 16"><path d="M3 1h7l4 4v10H3z" fill="#f2f2f2"/><text x="5" y="14" font-family="Liberation Sans" font-weight="bold" font-size="9" fill="#111">P</text></svg>
<div class="t" style="left:59px;top:657px;color:#e6e6e6">pom.xml</div>
<svg class="a" style="left:38px;top:674px" width="16" height="16" viewBox="0 0 16 16"><path d="M3 1h7l4 4v10H3z" fill="#f2f2f2"/><path d="M10 1v4h4" fill="#888"/><path d="M5 9h7M5 11.5h5" stroke="#222" stroke-width="1.2"/></svg>
<div class="t" style="left:59px;top:675px;color:#e6e6e6">README.md</div>
<svg class="a" style="left:38px;top:692px" width="16" height="16" viewBox="0 0 16 16"><path d="M3 3L1.5 13M3 3l4.5 0M7.5 3L13 3M13 3l1.5 10M7.5 3L3 13M7.5 3L13 13" stroke="#777" stroke-width="0.9"/><circle cx="2.5" cy="3" r="1.8" fill="#e04050"/><circle cx="8" cy="3" r="1.8" fill="#e04050"/><circle cx="13.5" cy="3" r="1.8" fill="#e04050"/><circle cx="2" cy="13" r="1.8" fill="#27a6e0"/><circle cx="14" cy="13" r="1.8" fill="#27a6e0"/></svg>
<div class="t" style="left:59px;top:693px;color:#e6e6e6">webpack.config.js</div>
<svg class="a" style="left:38px;top:710px" width="16" height="16" viewBox="0 0 16 16"><path d="M3 3L1.5 13M3 3l4.5 0M7.5 3L13 3M13 3l1.5 10M7.5 3L3 13M7.5 3L13 13" stroke="#777" stroke-width="0.9"/><circle cx="2.5" cy="3" r="1.8" fill="#e04050"/><circle cx="8" cy="3" r="1.8" fill="#e04050"/><circle cx="13.5" cy="3" r="1.8" fill="#e04050"/><circle cx="2" cy="13" r="1.8" fill="#27a6e0"/><circle cx="14" cy="13" r="1.8" fill="#27a6e0"/></svg>
<div class="t" style="left:59px;top:711px;color:#e6e6e6">webpack.generated.js</div>
<div class="a" style="left:482px;top:544px;width:602px;height:135px;background:#000;border:1px solid #6a6a6a"></div>
<svg class="a" style="left:488px;top:548px" width="10" height="14" viewBox="0 0 10 14"><circle cx="5" cy="5" r="4.8" fill="#f4e8e8"/><circle cx="5" cy="4.9" r="3.7" fill="#e00c0c"/><path d="M3.6 3.2a1.8 1.8 0 0 1 2.6 0.4" stroke="#ff8a8a" stroke-width="0.9" fill="none"/><rect x="2.6" y="8.6" width="4.8" height="5.2" rx="2.2" fill="#fff"/></svg>
<div class="t" style="left:502px;top:548px;color:#e6e6e6">The method addProduto(ProdutoVendido, NumberField, TextField, TextField) in the type Venda is not</div>
<div class="t" style="left:502px;top:563px;color:#e6e6e6">applicable for the arguments (ComboBox&lt;Produto&gt;, NumberField, TextField, TextField)</div>
<div class="a" style="left:483px;top:579px;width:600px;height:2px;background:#e8e8e8"></div>
<div class="t" style="left:487px;top:584px;color:#e6e6e6">3 quick fixes available:</div>
<svg class="a" style="left:494px;top:605px" width="15" height="14" viewBox="0 0 15 14"><path d="M1 12C2 7 5 5.5 9 5.5V2.5l5 4.5-5 4.5V8.5C6 8.5 3 9.5 1 12z" fill="#2fb83b"/></svg>
<svg class="a" style="left:494px;top:623px" width="15" height="14" viewBox="0 0 15 14"><path d="M1 12C2 7 5 5.5 9 5.5V2.5l5 4.5-5 4.5V8.5C6 8.5 3 9.5 1 12z" fill="#2fb83b"/></svg>
<svg class="a" style="left:495px;top:642px" width="12" height="12" viewBox="0 0 12 12"><circle cx="6" cy="6" r="5.5" fill="#2fb83b"/></svg>
<div class="a" style="left:484px;top:600px;width:599px;height:20px;overflow:hidden"><div class="t" style="left:30px;top:6px;color:#78b8e8;text-decoration:underline">Change method 'addProduto(ProdutoVendido, NumberField, TextField, TextField)' to 'addProduto(ComboBox&lt;Produto&gt;, NumberField, TextField, TextField)'</div></div>
<div class="t" style="left:514px;top:624px;color:#78b8e8;text-decoration:underline">Change type of 'txtProdutos' to 'ProdutoVendido'</div>
<div class="t" style="left:514px;top:642px;color:#78b8e8;text-decoration:underline">Create method 'addProduto(ComboBox&lt;Produto&gt;, NumberField, TextField, TextField)' in type 'Venda'</div>
<div class="a" style="left:483px;top:662px;width:600px;height:2px;background:#e8e8e8"></div>
<div class="t" style="left:880px;top:665px;width:202px;text-align:right;color:#5a5a5a;font-size:11px">Press 'F2' for focus</div>
<div class="a" style="left:1902px;top:120px;width:1px;height:558px;background:#5a5a5a"></div>
<div class="a" style="left:1902px;top:678px;width:1px;height:54px;background:#8a8a8a"></div>
<div class="a" style="left:1905px;top:124px;width:8px;height:8px;background:#e8187c"></div>
<div class="a" style="left:1903px;top:136px;width:10px;height:1px;background:#888"></div>
<div class="a" style="left:1906px;top:654px;width:9px;height:5px;border:1px solid #3a7ad0;background:#0a2a55"></div>
<div class="a" style="left:1906px;top:670px;width:9px;height:5px;border:1px solid #3a7ad0;background:#0a2a55"></div>
<div class="a" style="left:1906px;top:686px;width:9px;height:5px;border:1px solid #d82a60;background:#4a0a25"></div>
<svg class="a" style="left:372px;top:602px" width="9" height="9" viewBox="0 0 9 9"><circle cx="4.5" cy="4.5" r="4" fill="#8a8a8a"/><path d="M2 4.5h5" stroke="#000" stroke-width="1.2"/></svg>
<svg class="a" style="left:339px;top:151px" width="11" height="11" viewBox="0 0 11 11"><circle cx="5.5" cy="5.5" r="5" fill="#5a72e8"/><path d="M3 5.5l2 2 3.5-4" stroke="#fff" stroke-width="1.3" fill="none"/></svg>
<svg class="a" style="left:339px;top:331px" width="11" height="11" viewBox="0 0 11 11"><circle cx="5.5" cy="5.5" r="5" fill="#5a72e8"/><path d="M3 5.5l2 2 3.5-4" stroke="#fff" stroke-width="1.3" fill="none"/></svg>
<svg class="a" style="left:340px;top:525px" width="10" height="14" viewBox="0 0 10 14"><circle cx="5" cy="5" r="4.8" fill="#f4e8e8"/><circle cx="5" cy="4.9" r="3.7" fill="#e00c0c"/><path d="M3.6 3.2a1.8 1.8 0 0 1 2.6 0.4" stroke="#ff8a8a" stroke-width="0.9" fill="none"/><rect x="2.6" y="8.6" width="4.8" height="5.2" rx="2.2" fill="#fff"/></svg>
<svg class="a" style="left:482px;top:535px" width="70" height="4" viewBox="0 0 70 4"><path d="M0 3 L1 1 L3 3 L5 1 L7 3 L9 1 L11 3 L13 1 L15 3 L17 1 L19 3 L21 1 L23 3 L25 1 L27 3 L29 1 L31 3 L33 1 L35 3 L37 1 L39 3 L41 1 L43 3 L45 1 L47 3 L49 1 L51 3 L53 1 L55 3 L57 1 L59 3 L61 1 L63 3 L65 1 L67 3 L69 1" stroke="#e0306a" stroke-width="1" fill="none"/></svg>
<div class="a" style="left:339px;top:744px;width:1576px;height:1px;background:#3a3a3a"></div>
<div class="a" style="left:339px;top:744px;width:93px;height:1px;background:#7a7a7a"></div>
<div class="a" style="left:432px;top:745px;width:1px;height:22px;background:#1e1e1e"></div>
<div class="a" style="left:339px;top:745px;width:1px;height:22px;background:#1e1e1e"></div>
<svg class="a" style="left:343px;top:750px" width="15" height="14" viewBox="0 0 15 14"><rect x="0" y="0" width="15" height="11" rx="1.5" fill="#6b7fe3"/><rect x="2" y="2" width="11" height="6" fill="#f4f4ff"/><path d="M5 13h5" stroke="#6b7fe3" stroke-width="2"/></svg>
<div class="t" style="left:362px;top:749px;color:#e6e6e6">Console</div>
<svg class="a" style="left:414px;top:751px" width="11" height="11" viewBox="0 0 11 11"><path d="M0.5 0.5h3l2 2 2-2h3v3l-2 2 2 2v3h-3l-2-2-2 2h-3v-3l2-2-2-2z" fill="none" stroke="#e8e8e8" stroke-width="1"/></svg>
<div class="t" style="left:339px;top:768px;color:#8eb4a0;font-size:11.8px">fjsistemas - Application [Spring Boot App] C:\Program Files\Java\jdk-13.0.1\bin\javaw.exe&nbsp; (23 de abr de 2021 12:54:24)</div>
<div class="a" style="left:339px;top:782px;width:1576px;height:2px;background:#f0f0f0"></div>
<div class="a" style="left:1913px;top:784px;width:1px;height:220px;background:#3a3a3a"></div>
<div class="a" style="left:339px;top:1005px;width:1570px;height:1px;background:#6a6a6a"></div>
<svg class="a" style="left:1549px;top:749px" width="16" height="16" viewBox="0 0 16 16"><path d="M2.5 7a5.5 5.5 0 0 1 10-2.5M13.5 9a5.5 5.5 0 0 1-10 2.5" stroke="#f5c518" stroke-width="2.4" fill="none"/><path d="M14 1v5h-5zM2 15v-5h5z" fill="#f5c518"/></svg>
<svg class="a" style="left:1573px;top:748px" width="16" height="17" viewBox="0 0 16 17"><rect x="2" y="3" width="12" height="13" fill="#6e6e6e"/><rect x="1" y="1" width="14" height="2" fill="#6e6e6e"/><path d="M5 7l6 6M11 7l-6 6" stroke="#111" stroke-width="1.4"/></svg>
<svg class="a" style="left:1595px;top:748px" width="17" height="17" viewBox="0 0 17 17"><path d="M1 1l10 10M11 1L1 11M6 6l10 10M16 6L6 16" stroke="#6e6e6e" stroke-width="1.8"/></svg>
<svg class="a" style="left:1619px;top:749px" width="14" height="14" viewBox="0 0 14 14"><rect x="1" y="1" width="12" height="12" fill="#e8283c" stroke="#ff6070" stroke-width="0.6"/></svg>
<div class="a" style="left:1641px;top:748px;width:1px;height:19px;background:#444"></div>
<svg class="a" style="left:1648px;top:748px" width="17" height="17" viewBox="0 0 17 17"><path d="M9 1l7 6-7 8H4L0 11z" fill="#fff"/><path d="M11 15h5" stroke="#fff"/></svg>
<div class="a" style="left:1669px;top:745px;width:23px;height:23px;background:#0c1f35;border:1px solid #17314e"></div>
<svg class="a" style="left:1671px;top:747px" width="17" height="17" viewBox="0 0 17 17"><rect x="0.5" y="0.5" width="11" height="9" fill="#000" stroke="#ccc"/><path d="M8 9V6a3 3 0 0 1 6 0v3" stroke="#f5c518" stroke-width="1.6" fill="none"/><rect x="6" y="9" width="10" height="8" fill="#f5c518"/></svg>
<svg class="a" style="left:1694px;top:749px" width="16" height="15" viewBox="0 0 16 15"><path d="M0 1.5h15M0 6.5h15a3 3 0 0 1 0 6H8M0 11.5h5" stroke="#2ac8d8" stroke-width="1.6" fill="none"/><path d="M8 10l-3 2.5 3 2.5z" fill="#2ac8d8"/></svg>
<div class="a" style="left:1715px;top:745px;width:45px;height:23px;background:#0c1f35;border:1px solid #17314e"></div>
<svg class="a" style="left:1718px;top:747px" width="17" height="17" viewBox="0 0 17 17"><rect x="4" y="0" width="12" height="10" fill="#2fb83b"/><path d="M6 2l3 3-3 3M10 8h4" stroke="#fff" stroke-width="1.2" fill="none"/><rect x="0" y="10" width="7" height="6" fill="#6b7fe3"/><rect x="1.5" y="11.5" width="4" height="3" fill="#f4f4ff"/></svg>
<svg class="a" style="left:1741px;top:747px" width="17" height="17" viewBox="0 0 17 17"><rect x="4" y="0" width="12" height="10" fill="#d21d1d"/><path d="M6 2l3 3-3 3M10 8h4" stroke="#fff" stroke-width="1.2" fill="none"/><rect x="0" y="10" width="7" height="6" fill="#6b7fe3"/><rect x="1.5" y="11.5" width="4" height="3" fill="#f4f4ff"/></svg>
<div class="a" style="left:1764px;top:748px;width:1px;height:19px;background:#444"></div>
<svg class="a" style="left:1771px;top:748px" width="17" height="17" viewBox="0 0 17 17"><rect x="0.5" y="0.5" width="10" height="9" fill="none" stroke="#ccc"/><path d="M9 4h6v6l2 2H7l2-2z" fill="#2fb83b"/><path d="M12 12v5" stroke="#2fb83b" stroke-width="1.5"/></svg>
<svg class="a" style="left:1797px;top:749px" width="15" height="14" viewBox="0 0 15 14"><rect x="0" y="0" width="15" height="11" rx="1.5" fill="#6e6e6e"/><path d="M5 13h5" stroke="#6e6e6e" stroke-width="2"/></svg>
<svg class="a" style="left:1816px;top:756px" width="9" height="5" viewBox="0 0 9 5"><path d="M0 0h9l-4.5 5z" fill="#6e6e6e"/></svg>
<svg class="a" style="left:1833px;top:747px" width="17" height="17" viewBox="0 0 17 17"><rect x="1" y="5" width="12" height="11" fill="#6b7fe3"/><rect x="2.5" y="7" width="9" height="8" fill="#f4f4ff"/><path d="M12.5 0v8M8.5 4h8" stroke="#f5c518" stroke-width="2"/></svg>
<svg class="a" style="left:1853px;top:756px" width="9" height="5" viewBox="0 0 9 5"><path d="M0 0h9l-4.5 5z" fill="#c8c8c8"/></svg>
<svg class="a" style="left:1873px;top:752px" width="12" height="5" viewBox="0 0 12 5"><rect x="0.5" y="0.5" width="11" height="3" fill="none" stroke="#8a8a8a"/></svg>
<svg class="a" style="left:1895px;top:751px" width="11" height="11" viewBox="0 0 11 11"><rect x="0.5" y="0.5" width="10" height="10" fill="none" stroke="#8a8a8a"/><path d="M0.5 2.5h10" stroke="#8a8a8a"/></svg>
<div class="a" style="left:1178px;top:1010px;width:2px;height:26px;background:#e8e8e8"></div>
<div class="a" style="left:1312px;top:1010px;width:2px;height:26px;background:#e8e8e8"></div>
<div class="a" style="left:1440px;top:1010px;width:2px;height:26px;background:#e8e8e8"></div>
<div class="t" style="left:1186px;top:1016px;color:#e6e6e6">Writable</div>
<div class="t" style="left:1320px;top:1016px;color:#e6e6e6">Smart Insert</div>
<div class="t" style="left:1447px;top:1016px;color:#e6e6e6;letter-spacing:-0.6px">477 : 37 : 13755</div>
<svg class="a" style="left:1565px;top:1016px" width="3" height="12" viewBox="0 0 3 12"><circle cx="1.5" cy="1.5" r="1.3" fill="#ddd"/><circle cx="1.5" cy="6" r="1.3" fill="#ddd"/><circle cx="1.5" cy="10.5" r="1.3" fill="#ddd"/></svg>
<svg class="a" style="left:1852px;top:1014px" width="3" height="22" viewBox="0 0 3 22"><rect x="0" y="0" width="2.4" height="2.4" fill="#ddd"/><rect x="0" y="6" width="2.4" height="2.4" fill="#ddd"/><rect x="0" y="12" width="2.4" height="2.4" fill="#ddd"/><rect x="0" y="18" width="2.4" height="2.4" fill="#ddd"/></svg>
<div class="a" style="left:1856px;top:1010px;width:28px;height:31px;border:2px solid #eee"></div>
<svg class="a" style="left:1863px;top:1017px" width="14" height="15" viewBox="0 0 14 15"><path d="M7 1.5c2.6 0 4 2.2 4 5v3.5l2.5 2.5H0.5L3 10V6.5c0-2.8 1.4-5 4-5z" fill="#e8306a"/><path d="M4.5 12.5h5" stroke="#800" stroke-width="0.9"/></svg>
<svg class="a" style="left:1893px;top:1017px" width="3" height="18" viewBox="0 0 3 18"><rect x="0" y="0" width="2.4" height="2.4" fill="#ddd"/><rect x="0" y="5" width="2.4" height="2.4" fill="#ddd"/><rect x="0" y="10" width="2.4" height="2.4" fill="#ddd"/><rect x="0" y="15" width="2.4" height="2.4" fill="#ddd"/></svg>
<svg class="a" style="left:1902px;top:1016px" width="12" height="17" viewBox="0 0 12 17"><circle cx="6" cy="6" r="5.5" fill="#f2c40c"/><circle cx="5.5" cy="5.5" r="2.5" fill="#fff4b0"/><rect x="3.5" y="10" width="5" height="6" rx="1.5" fill="#f2c40c"/></svg>
<div class="a" style="left:0;top:1040px;width:1920px;height:40px;background:#101010"></div>
<svg class="a" style="left:16px;top:1052px" width="17" height="17" viewBox="0 0 17 17"><path d="M0 2.2l6.8-1v6.5H0zM7.8 1.1L17 0v7.7H7.8zM0 8.7h6.8v6.5L0 14.2zM7.8 8.7H17V17l-9.2-1.3z" fill="#fff"/></svg>
<div class="a" style="left:55px;top:1078px;width:40px;height:2px;background:#9ad8f0"></div>
<svg class="a" style="left:62px;top:1047px" width="24" height="24" viewBox="0 0 24 24"><circle cx="12" cy="12" r="11.5" fill="#1a7fd4"/><path d="M3 14a10 10 0 0 1 19-4c1 4-3 6-6 5-3 0-3-3-1-4-4-1-8 1-9 5z" fill="#3bd16f"/><circle cx="6" cy="18" r="5" fill="#bbb"/><circle cx="6" cy="16.5" r="1.8" fill="#fff"/><path d="M3 21a3 3 0 0 1 6 0" fill="#fff"/></svg>
<svg class="a" style="left:112px;top:1048px" width="24" height="24" viewBox="0 0 24 24"><rect x="8" y="1" width="15" height="21" fill="#1f6fd0"/><path d="M8 11h15v11H8z" fill="#28a8ea"/><rect x="0" y="5" width="13" height="13" rx="1" fill="#0a5cbf"/><circle cx="6.5" cy="11.5" r="3.5" fill="none" stroke="#fff" stroke-width="1.8"/></svg>
<div class="a" style="left:149px;top:1040px;width:48px;height:40px;background:#333"></div>
<div class="a" style="left:149px;top:1078px;width:48px;height:2px;background:#9ad8f0"></div>
<svg class="a" style="left:160px;top:1047px" width="26" height="24" viewBox="0 0 26 24"><circle cx="13" cy="12" r="11" fill="#2c2255"/><path d="M2 8.5h22M2 12h22M2 15.5h22" stroke="#f0f0ff" stroke-width="1.3"/><path d="M7 1.5A11 11 0 0 0 7 22.5" stroke="#f7941e" stroke-width="1" fill="none"/></svg>
<div class="a" style="left:202px;top:1078px;width:40px;height:2px;background:#9ad8f0"></div>
<svg class="a" style="left:210px;top:1048px" width="24" height="24" viewBox="0 0 24 24"><circle cx="12" cy="12" r="11" fill="#1aa0e8"/><text x="6" y="18" font-family="Liberation Sans" font-weight="bold" font-size="17" fill="#fff">S</text></svg>
<svg class="a" style="left:1777px;top:1054px" width="14" height="9" viewBox="0 0 14 9"><path d="M1 7l6-6 6 6" stroke="#fff" stroke-width="1.3" fill="none"/></svg>
<div class="t" style="left:1817px;top:1044px;color:#fff;font-size:12px">14:04</div>
<div class="t" style="left:1803px;top:1062px;color:#fff;font-size:12px">23/04/2021</div>
<svg class="a" style="left:1878px;top:1050px" width="18" height="17" viewBox="0 0 18 17"><path d="M0.5 0.5h17v12H8l-4 4v-4H0.5z" fill="none" stroke="#fff"/></svg>
<div class="a" style="left:1915px;top:1040px;width:1px;height:40px;background:#555"></div>
</body></html>
